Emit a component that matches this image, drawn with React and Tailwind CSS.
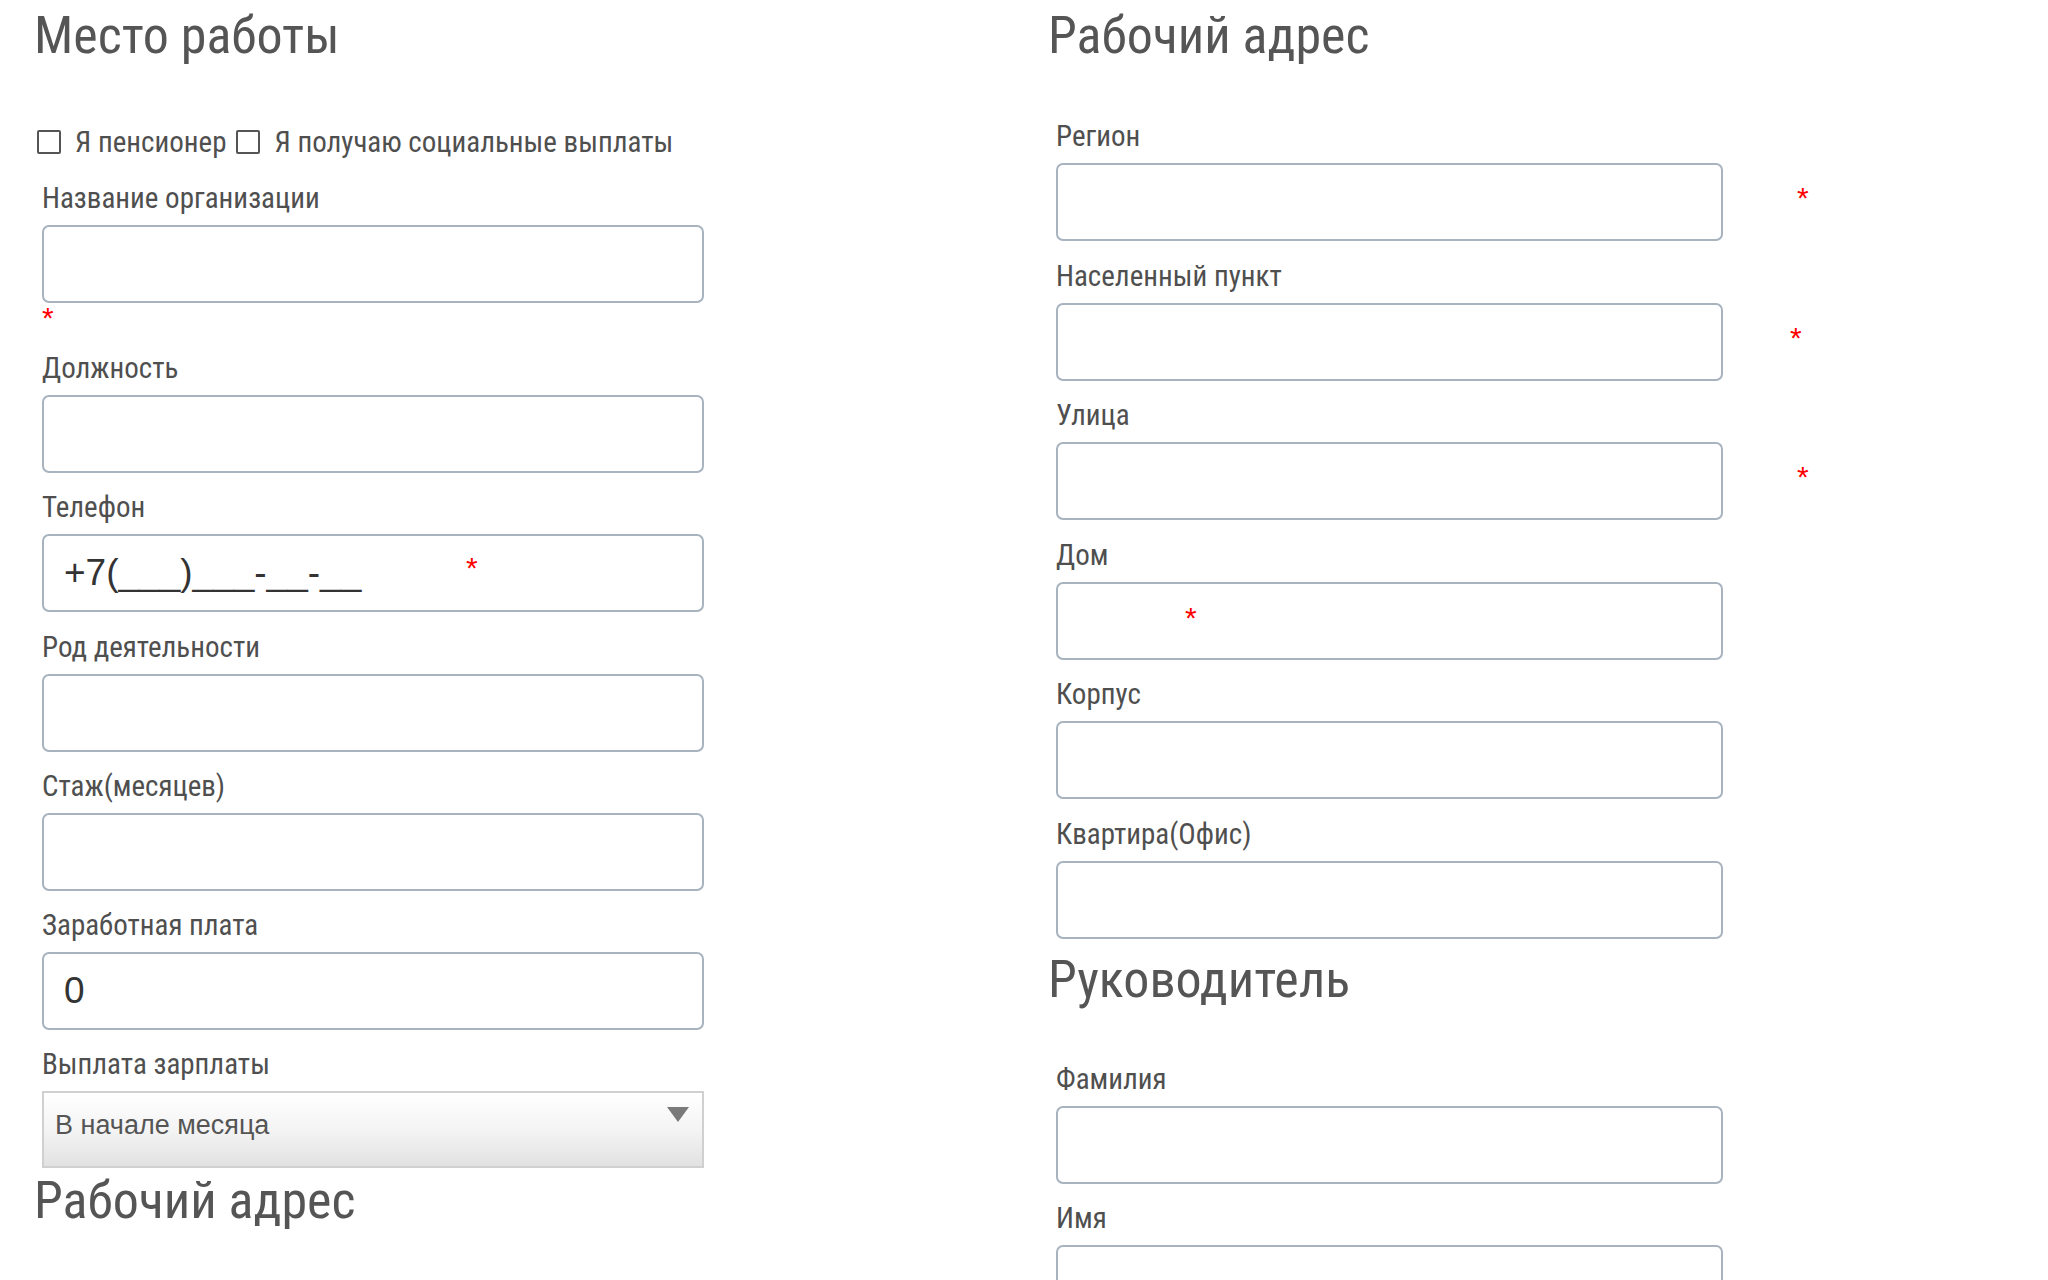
import React from "react";

const FONT_UI = "font-['Roboto_Condensed','Roboto','Open_Sans',sans-serif]";
const FONT_IN = "font-['Liberation_Sans',Arial,sans-serif]";

function Star({ className = "" }) {
  return (
    <span
      className={`absolute text-[30px] leading-none text-[#ff0000] ${FONT_IN} ${className}`}
    >
      *
    </span>
  );
}

function Heading({ children, className = "" }) {
  return (
    <h2
      className={`text-[52px] leading-[60px] font-normal text-[#555555] -ml-[8px] ${FONT_UI} ${className}`}
    >
      {children}
    </h2>
  );
}

function Field({ label, value = "", star, starBelow = false, className = "" }) {
  return (
    <div className={className}>
      <div className={`text-[29px] leading-[32px] text-[#4f4f4f] mb-[11px] ${FONT_UI}`}>
        {label}
      </div>
      <div className="relative">
        <input
          type="text"
          defaultValue={value}
          className={`block w-full h-[78px] border-2 border-[#a7b3bf] rounded-[7px] bg-white px-[20px] text-[37px] text-[#333333] outline-none ${FONT_IN}`}
        />
        {star}
      </div>
      {starBelow && (
        <div className="relative h-[30px]">
          <Star className="left-0 top-0" />
        </div>
      )}
    </div>
  );
}

function Checkbox({ label }) {
  return (
    <div className="flex items-center">
      <span className="block w-[24px] h-[24px] border-2 border-[#555555] bg-white rounded-[2px]" />
      <span className={`ml-[14px] text-[29px] leading-[24px] text-[#4f4f4f] ${FONT_UI}`}>
        {label}
      </span>
    </div>
  );
}

export default function App() {
  return (
    <div className="w-[2048px] h-[1280px] bg-white overflow-hidden flex">
      {/* Left column */}
      <div className="pl-[42px] w-[704px] shrink-0">
        <div className="pt-[6px]">
          <Heading>Место работы</Heading>
        </div>
        <div className="mt-[64px] h-[24px] flex items-center gap-[10px] -ml-[5px]">
          <Checkbox label="Я пенсионер" />
          <Checkbox label="Я получаю социальные выплаты" />
        </div>
        <Field className="mt-[28px]" label="Название организации" starBelow />
        <Field className="mt-[18.5px]" label="Должность" />
        <Field
          className="mt-[18.5px]"
          label="Телефон"
          value="+7(___)___-__-__"
          star={<Star className="left-[424px] top-[19px]" />}
        />
        <Field className="mt-[18.5px]" label="Род деятельности" />
        <Field className="mt-[18.5px]" label="Стаж(месяцев)" />
        <Field className="mt-[17.5px]" label="Заработная плата" value="0" />
        <div className="mt-[18px]">
          <div className={`text-[29px] leading-[32px] text-[#4f4f4f] mb-[11px] ${FONT_UI}`}>
            Выплата зарплаты
          </div>
          <div className="relative h-[77px] border-2 border-[#d0d0d0] bg-linear-to-b from-white via-[#f4f4f4] to-[#e2e2e2]">
            <div className={`pl-[11px] text-[27px] leading-[64px] text-[#555555] ${FONT_IN}`}>
              В начале месяца
            </div>
            <svg
              className="absolute right-[13px] top-[14px]"
              width="22"
              height="15"
              viewBox="0 0 22 15"
            >
              <polygon points="0,0 22,0 11,15" fill="#7a7a7a" />
            </svg>
          </div>
        </div>
        <div className="mt-[3px]">
          <Heading>Рабочий адрес</Heading>
        </div>
      </div>

      {/* Right column */}
      <div className="ml-[352px] w-[667px] shrink-0">
        <div className="pt-[6px]">
          <Heading>Рабочий адрес</Heading>
        </div>
        <Field
          className="mt-[54px]"
          label="Регион"
          star={<Star className="left-[741px] top-[20px]" />}
        />
        <Field
          className="mt-[18.5px]"
          label="Населенный пункт"
          star={<Star className="left-[734px] top-[20px]" />}
        />
        <Field
          className="mt-[18.5px]"
          label="Улица"
          star={<Star className="left-[741px] top-[20px]" />}
        />
        <Field
          className="mt-[18.5px]"
          label="Дом"
          star={<Star className="left-[129px] top-[21px]" />}
        />
        <Field className="mt-[18.5px]" label="Корпус" />
        <Field className="mt-[18.5px]" label="Квартира(Офис)" />
        <div className="mt-[11px]">
          <Heading>Руководитель</Heading>
        </div>
        <Field className="mt-[53px]" label="Фамилия" />
        <Field className="mt-[18.5px]" label="Имя" />
      </div>
    </div>
  );
}
